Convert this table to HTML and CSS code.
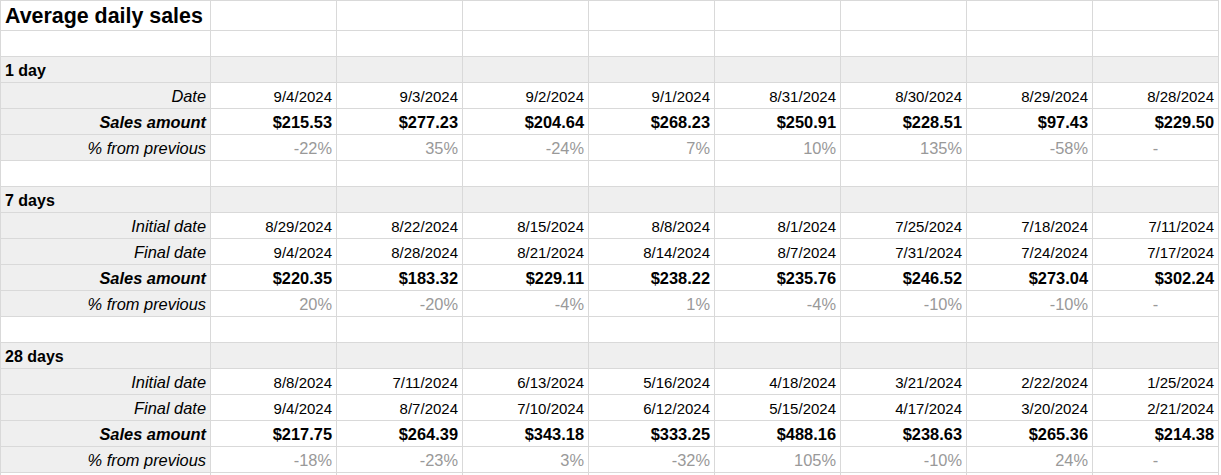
FILE: index.html
```html
<!DOCTYPE html>
<html lang="en">
<head>
<meta charset="utf-8">
<title>Average daily sales</title>
<link rel="stylesheet" href="styles.css">
</head>
<body>
<div class="sheet">
  <div class="row">
    <div class="c title">Average daily sales</div>
    <div class="c"></div><div class="c"></div><div class="c"></div><div class="c"></div><div class="c"></div><div class="c"></div><div class="c"></div><div class="c"></div>
  </div>
  <div class="row">
    <div class="c"></div><div class="c"></div><div class="c"></div><div class="c"></div><div class="c"></div><div class="c"></div><div class="c"></div><div class="c"></div><div class="c"></div>
  </div>

  <div class="row sec">
    <div class="c">1 day</div>
    <div class="c"></div><div class="c"></div><div class="c"></div><div class="c"></div><div class="c"></div><div class="c"></div><div class="c"></div><div class="c"></div>
  </div>
  <div class="row">
    <div class="c lbl">Date</div>
    <div class="c date">9/4/2024</div><div class="c date">9/3/2024</div><div class="c date">9/2/2024</div><div class="c date">9/1/2024</div><div class="c date">8/31/2024</div><div class="c date">8/30/2024</div><div class="c date">8/29/2024</div><div class="c date">8/28/2024</div>
  </div>
  <div class="row">
    <div class="c lbl strong">Sales amount</div>
    <div class="c amt">$215.53</div><div class="c amt">$277.23</div><div class="c amt">$204.64</div><div class="c amt">$268.23</div><div class="c amt">$250.91</div><div class="c amt">$228.51</div><div class="c amt">$97.43</div><div class="c amt">$229.50</div>
  </div>
  <div class="row">
    <div class="c lbl">% from previous</div>
    <div class="c pct">-22%</div><div class="c pct">35%</div><div class="c pct">-24%</div><div class="c pct">7%</div><div class="c pct">10%</div><div class="c pct">135%</div><div class="c pct">-58%</div><div class="c pct dash">-</div>
  </div>
  <div class="row">
    <div class="c"></div><div class="c"></div><div class="c"></div><div class="c"></div><div class="c"></div><div class="c"></div><div class="c"></div><div class="c"></div><div class="c"></div>
  </div>

  <div class="row sec">
    <div class="c">7 days</div>
    <div class="c"></div><div class="c"></div><div class="c"></div><div class="c"></div><div class="c"></div><div class="c"></div><div class="c"></div><div class="c"></div>
  </div>
  <div class="row">
    <div class="c lbl">Initial date</div>
    <div class="c date">8/29/2024</div><div class="c date">8/22/2024</div><div class="c date">8/15/2024</div><div class="c date">8/8/2024</div><div class="c date">8/1/2024</div><div class="c date">7/25/2024</div><div class="c date">7/18/2024</div><div class="c date">7/11/2024</div>
  </div>
  <div class="row">
    <div class="c lbl">Final date</div>
    <div class="c date">9/4/2024</div><div class="c date">8/28/2024</div><div class="c date">8/21/2024</div><div class="c date">8/14/2024</div><div class="c date">8/7/2024</div><div class="c date">7/31/2024</div><div class="c date">7/24/2024</div><div class="c date">7/17/2024</div>
  </div>
  <div class="row">
    <div class="c lbl strong">Sales amount</div>
    <div class="c amt">$220.35</div><div class="c amt">$183.32</div><div class="c amt">$229.11</div><div class="c amt">$238.22</div><div class="c amt">$235.76</div><div class="c amt">$246.52</div><div class="c amt">$273.04</div><div class="c amt">$302.24</div>
  </div>
  <div class="row">
    <div class="c lbl">% from previous</div>
    <div class="c pct">20%</div><div class="c pct">-20%</div><div class="c pct">-4%</div><div class="c pct">1%</div><div class="c pct">-4%</div><div class="c pct">-10%</div><div class="c pct">-10%</div><div class="c pct dash">-</div>
  </div>
  <div class="row">
    <div class="c"></div><div class="c"></div><div class="c"></div><div class="c"></div><div class="c"></div><div class="c"></div><div class="c"></div><div class="c"></div><div class="c"></div>
  </div>

  <div class="row sec">
    <div class="c">28 days</div>
    <div class="c"></div><div class="c"></div><div class="c"></div><div class="c"></div><div class="c"></div><div class="c"></div><div class="c"></div><div class="c"></div>
  </div>
  <div class="row">
    <div class="c lbl">Initial date</div>
    <div class="c date">8/8/2024</div><div class="c date">7/11/2024</div><div class="c date">6/13/2024</div><div class="c date">5/16/2024</div><div class="c date">4/18/2024</div><div class="c date">3/21/2024</div><div class="c date">2/22/2024</div><div class="c date">1/25/2024</div>
  </div>
  <div class="row">
    <div class="c lbl">Final date</div>
    <div class="c date">9/4/2024</div><div class="c date">8/7/2024</div><div class="c date">7/10/2024</div><div class="c date">6/12/2024</div><div class="c date">5/15/2024</div><div class="c date">4/17/2024</div><div class="c date">3/20/2024</div><div class="c date">2/21/2024</div>
  </div>
  <div class="row">
    <div class="c lbl strong">Sales amount</div>
    <div class="c amt">$217.75</div><div class="c amt">$264.39</div><div class="c amt">$343.18</div><div class="c amt">$333.25</div><div class="c amt">$488.16</div><div class="c amt">$238.63</div><div class="c amt">$265.36</div><div class="c amt">$214.38</div>
  </div>
  <div class="row">
    <div class="c lbl">% from previous</div>
    <div class="c pct">-18%</div><div class="c pct">-23%</div><div class="c pct">3%</div><div class="c pct">-32%</div><div class="c pct">105%</div><div class="c pct">-10%</div><div class="c pct">24%</div><div class="c pct dash">-</div>
  </div>
  <div class="row tail">
    <div class="c"></div><div class="c"></div><div class="c"></div><div class="c"></div><div class="c"></div><div class="c"></div><div class="c"></div><div class="c"></div><div class="c"></div>
  </div>
</div>
</body>
</html>
```

FILE: styles.css
```css
html, body {
  margin: 0;
  padding: 0;
  background: #ffffff;
  overflow: hidden;
}

.sheet {
  display: grid;
  grid-template-columns: 209px repeat(8, 125px);
  grid-template-rows: 29px repeat(17, 25px) 2px;
  gap: 1px;
  width: max-content;
  background: #d9d9d9;
  border: 1px solid #d9d9d9;
  border-bottom: 0;
  font-family: "Liberation Sans", Arial, sans-serif;
  color: #000000;
}

.row {
  display: contents;
}

.c {
  background: #ffffff;
  display: flex;
  align-items: flex-end;
  justify-content: flex-end;
  padding: 0 4px 3px 4px;
  font-size: 16.4px;
  line-height: 17px;
  white-space: nowrap;
  overflow: hidden;
  min-width: 0;
}

.tail .c {
  padding: 0;
}

.title {
  justify-content: flex-start;
  font-size: 21.4px;
  line-height: 22px;
  font-weight: bold;
  padding-bottom: 3px;
}

.sec .c {
  background: #efefef;
  font-weight: bold;
  font-size: 16px;
  justify-content: flex-start;
}

.lbl {
  background: #efefef;
  font-style: italic;
}

.lbl.strong {
  font-weight: bold;
}

.date {
  font-size: 15px;
}

.amt {
  font-weight: bold;
}

.pct {
  color: #999999;
}

.dash {
  justify-content: center;
}
```
